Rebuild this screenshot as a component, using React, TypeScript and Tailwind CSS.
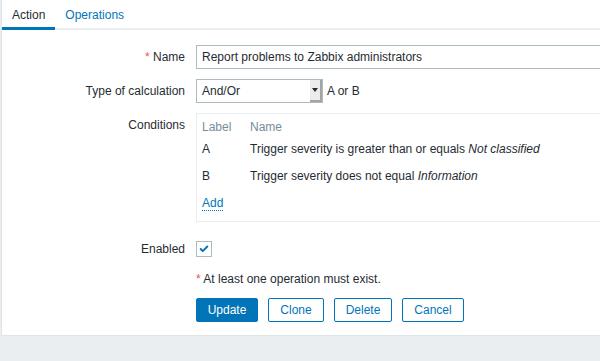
import { Check } from 'lucide-react'

export default function App() {
  const conditions = [
    { label: 'A', text: 'Trigger severity is greater than or equals ', value: 'Not classified' },
    { label: 'B', text: 'Trigger severity does not equal ', value: 'Information' },
  ]

  return (
    <div className="w-[600px] h-[361px] overflow-hidden bg-[#ebeef0] font-['Liberation_Sans',Arial,sans-serif] text-[12px] text-[#1f2c33]">
      <div className="ml-px h-[336px] bg-white border-l border-b border-[#dfe4e7] overflow-hidden">
        {/* tabs */}
        <div className="flex h-[30px] border-b-2 border-[#ebeef0]">
          <div className="h-[30px] px-[10px] pt-[6px] border-b-[3px] border-[#0275b8] text-[#1f2c33]">
            Action
          </div>
          <div className="h-[28px] px-[10px] pt-[6px] text-[#0275b8]">Operations</div>
        </div>

        <div className="pt-[15px]">
          {/* Name */}
          <div className="flex items-center gap-[10px]">
            <div className="w-[184px] shrink-0 text-right pr-px">
              <span className="text-[#e45959]">*</span> Name
            </div>
            <div className="w-[453px] shrink-0 h-[24px] border border-[#acbbc0] px-[5px] flex items-center">
              Report problems to Zabbix administrators
            </div>
          </div>

          {/* Type of calculation */}
          <div className="flex items-center gap-[10px] mt-[10px]">
            <div className="w-[184px] shrink-0 text-right pr-px">Type of calculation</div>
            <div className="flex items-center">
              <div className="w-[127px] h-[24px] border border-[#acbbc0] pl-[5px] flex items-center justify-between">
                <span>And/Or</span>
                <div className="w-[12px] h-[22px] bg-[#ececec] border-r-2 border-b-2 border-[#a4a4a4] flex items-center justify-center">
                  <div className="w-0 h-0 border-l-[3px] border-r-[3px] border-t-[4px] border-l-transparent border-r-transparent border-t-[#1f2c33]" />
                </div>
              </div>
              <span className="ml-[4px]">A or B</span>
            </div>
          </div>

          {/* Conditions */}
          <div className="flex items-start gap-[10px] mt-[10px]">
            <div className="w-[184px] shrink-0 text-right pr-px pt-[3px]">Conditions</div>
            <div className="w-[453px] shrink-0 h-[109px] border border-[#ebeef0] pl-[5px] pt-[5px]">
              <div className="flex h-[16px] items-center text-[#768d99]">
                <div className="w-[48px]">Label</div>
                <div>Name</div>
              </div>
              {conditions.map((c) => (
                <div key={c.label} className="flex h-[27px] items-center">
                  <div className="w-[48px]">{c.label}</div>
                  <div>
                    {c.text}
                    <i>{c.value}</i>
                  </div>
                </div>
              ))}
              <div className="flex h-[27px] items-center pt-[2px]">
                <span className="text-[#0275b8] border-b border-dotted border-[#0275b8] leading-[14px]">
                  Add
                </span>
              </div>
            </div>
          </div>

          {/* Enabled */}
          <div className="flex items-center gap-[10px] mt-[15px] h-[24px]">
            <div className="w-[184px] shrink-0 text-right pr-px">Enabled</div>
            <div className="w-[16px] h-[16px] border border-[#acbbc0] flex items-center justify-center">
              <Check className="w-[10px] h-[10px] text-[#0275b8]" strokeWidth={4.5} />
            </div>
          </div>

          {/* message */}
          <div className="ml-[194px] mt-[9px]">
            <span className="text-[#e45959]">*</span> At least one operation must exist.
          </div>

          {/* buttons */}
          <div className="ml-[194px] mt-[10px] flex gap-[10px]">
            <button className="h-[24px] w-[62px] rounded-[2px] bg-[#0275b8] border border-[#0275b8] text-white">
              Update
            </button>
            <button className="h-[24px] w-[56px] rounded-[2px] border border-[#0275b8] text-[#0275b8] bg-white">
              Clone
            </button>
            <button className="h-[24px] w-[58px] rounded-[2px] border border-[#0275b8] text-[#0275b8] bg-white">
              Delete
            </button>
            <button className="h-[24px] w-[62px] rounded-[2px] border border-[#0275b8] text-[#0275b8] bg-white">
              Cancel
            </button>
          </div>
        </div>
      </div>
    </div>
  )
}
